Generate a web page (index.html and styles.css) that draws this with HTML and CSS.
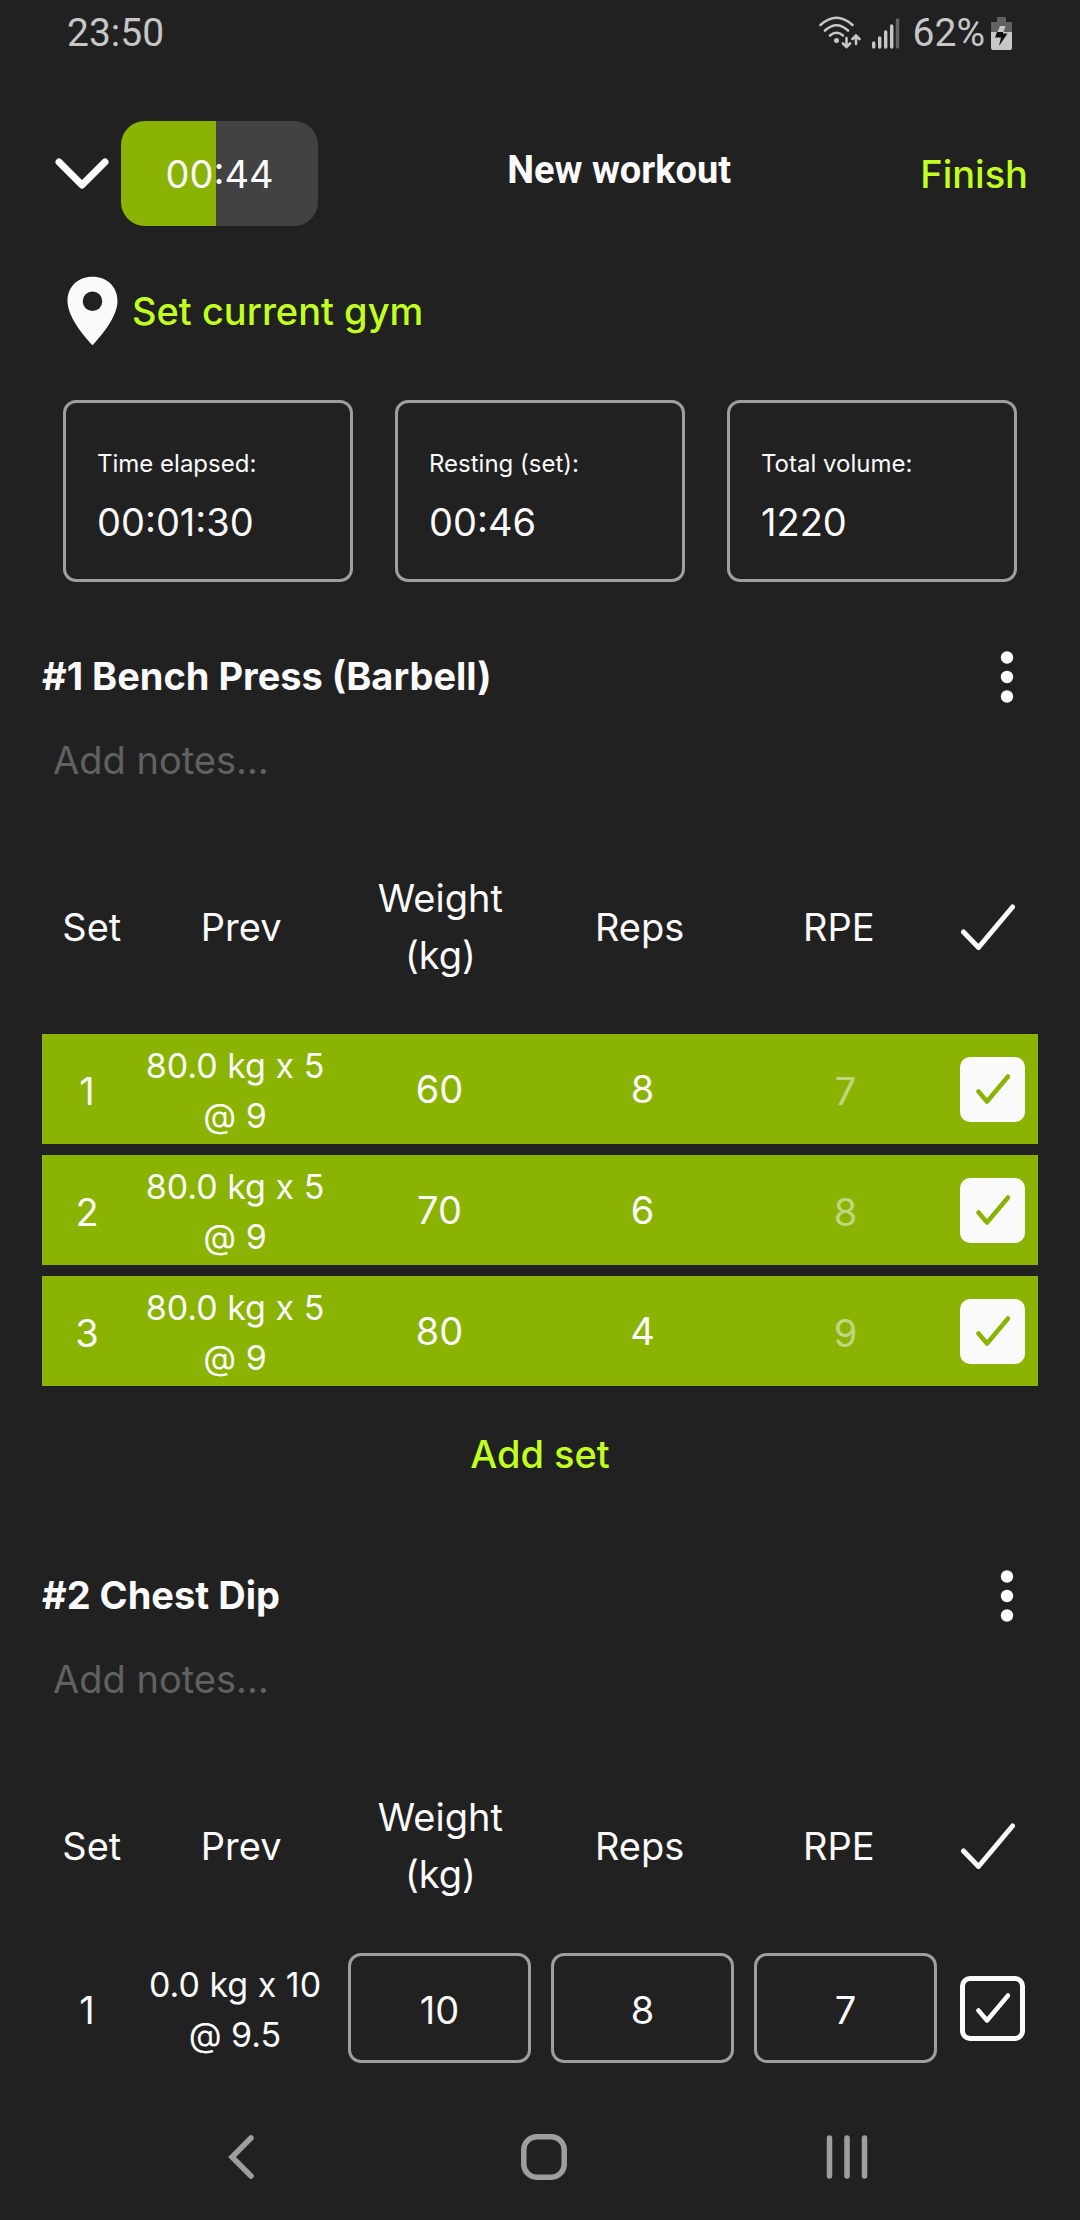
FILE: index.html
```html
<!DOCTYPE html>
<html lang="en">
<head>
<meta charset="utf-8">
<meta name="viewport" content="width=device-width, initial-scale=1">
<title>New workout</title>
<link rel="stylesheet" href="styles.css">
</head>
<body>
<svg class="defs" aria-hidden="true">
  <symbol id="tick" viewBox="0 0 54 46">
    <path d="M2.500 28 17.500 43.500 51.500 3" fill="none" stroke="currentColor" stroke-width="5" stroke-linecap="round" stroke-linejoin="round"/>
  </symbol>
  <symbol id="tick-small" viewBox="0 0 34 30">
    <path d="M2.500 17.500 11 27.500 32 2.500" fill="none" stroke="currentColor" stroke-width="4.500" stroke-linecap="round" stroke-linejoin="round"/>
  </symbol>
  <symbol id="dots" viewBox="0 0 14 52">
    <circle cx="7" cy="6.500" r="6.200"/><circle cx="7" cy="26" r="6.200"/><circle cx="7" cy="45.500" r="6.200"/>
  </symbol>
</svg>

<div class="status">
  <span>23:50</span>
  <div class="status-icons">
    <svg width="42" height="34" viewBox="819 14 42 34" aria-label="Wi-Fi" role="img">
      <g fill="none" stroke="currentColor" stroke-width="2.600" stroke-linecap="round">
        <path d="M820.500 23Q836.500 8.500 852.500 23M825 28.500Q836.500 18 848 28.500M830 33.500Q836.500 28 843 33.500"/>
        <path d="M846.500 36V44M843 41.500 846.500 45 850 41.500M856 42V34.500M852.500 37 856 33.500 859.500 37"/>
      </g>
      <circle cx="836.500" cy="38.500" r="2.500" fill="currentColor"/>
    </svg>
    <svg class="signal" width="28" height="34" viewBox="872 14 28 34" aria-label="Signal" role="img">
      <g stroke="currentColor" stroke-width="3.400" stroke-linecap="round">
        <path d="M873.700 41V45M879.700 36V45M885.700 30V45M891.700 24V45"/>
        <path d="M897.500 18V45" stroke="#636363"/>
      </g>
    </svg>
    <span>62%</span>
    <svg width="22" height="34" viewBox="991 14 22 34" aria-label="Charging" role="img">
      <path d="M997 15H1006V20H1012V30H991V20H997Z" fill="#616161"/>
      <path d="M991 30H1012V46Q1012 48 1010 48H993Q991 48 991 46Z" fill="currentColor"/>
      <path d="M1000 24H1005.500L1003.500 30H997.500Z" fill="currentColor"/>
      <path d="M997 30H1003V31.500H1007.500L999 44 1001 35.500H995Z" fill="#101010"/>
    </svg>
  </div>
</div>

<header class="top">
  <div class="top-left">
    <button class="icon-btn" aria-label="Minimise">
      <svg width="54" height="32" viewBox="0 0 54 32"><path d="M4 4 27 27 50 4" fill="none" stroke="currentColor" stroke-width="7" stroke-linecap="round" stroke-linejoin="round"/></svg>
    </button>
    <button class="timer">00:44</button>
  </div>
  <h1>New workout</h1>
  <button class="link">Finish</button>
</header>

<main>
  <button class="link gym">
    <svg width="51" height="70" viewBox="0 0 52 70"><path fill-rule="evenodd" d="M26 0C11 0 .5 10.500.5 24.500.5 41 17 60 26 70 35 60 51.500 41 51.500 24.500 51.500 10.500 41 0 26 0ZM26 15A10 10 0 0 1 26 35 10 10 0 0 1 26 15Z"/></svg>
    Set current gym
  </button>

  <dl class="stats">
    <div class="card"><dt>Time elapsed:</dt><dd>00:01:30</dd></div>
    <div class="card"><dt>Resting (set):</dt><dd>00:46</dd></div>
    <div class="card"><dt>Total volume:</dt><dd>1220</dd></div>
  </dl>

  <section class="exercise">
    <div class="title-row">
      <h2>#1 Bench Press (Barbell)</h2>
      <button class="icon-btn menu" aria-label="Exercise options"><svg width="14" height="52"><use href="#dots"/></svg></button>
    </div>
    <input class="notes" type="text" placeholder="Add notes..." aria-label="Notes for Bench Press">
    <table>
      <thead>
        <tr><th>Set</th><th>Prev</th><th>Weight (kg)</th><th>Reps</th><th>RPE</th><th><svg width="54" height="46" aria-label="Done" role="img"><use href="#tick"/></svg></th></tr>
      </thead>
      <tbody>
        <tr class="done">
          <td>1</td><td class="prev">80.0 kg x 5 @ 9</td>
          <td><input type="text" inputmode="decimal" value="60" aria-label="Weight, set 1"></td>
          <td><input type="text" inputmode="numeric" value="8" aria-label="Reps, set 1"></td>
          <td class="rpe"><input type="text" placeholder="7" aria-label="RPE, set 1"></td>
          <td><label class="check"><input type="checkbox" checked aria-label="Set 1 done"><svg width="34" height="30"><use href="#tick-small"/></svg></label></td>
        </tr>
        <tr class="done">
          <td>2</td><td class="prev">80.0 kg x 5 @ 9</td>
          <td><input type="text" inputmode="decimal" value="70" aria-label="Weight, set 2"></td>
          <td><input type="text" inputmode="numeric" value="6" aria-label="Reps, set 2"></td>
          <td class="rpe"><input type="text" placeholder="8" aria-label="RPE, set 2"></td>
          <td><label class="check"><input type="checkbox" checked aria-label="Set 2 done"><svg width="34" height="30"><use href="#tick-small"/></svg></label></td>
        </tr>
        <tr class="done">
          <td>3</td><td class="prev">80.0 kg x 5 @ 9</td>
          <td><input type="text" inputmode="decimal" value="80" aria-label="Weight, set 3"></td>
          <td><input type="text" inputmode="numeric" value="4" aria-label="Reps, set 3"></td>
          <td class="rpe"><input type="text" placeholder="9" aria-label="RPE, set 3"></td>
          <td><label class="check"><input type="checkbox" checked aria-label="Set 3 done"><svg width="34" height="30"><use href="#tick-small"/></svg></label></td>
        </tr>
      </tbody>
    </table>
    <button class="link add-set">Add set</button>
  </section>

  <section class="exercise">
    <div class="title-row">
      <h2>#2 Chest Dip</h2>
      <button class="icon-btn menu" aria-label="Exercise options"><svg width="14" height="52"><use href="#dots"/></svg></button>
    </div>
    <input class="notes" type="text" placeholder="Add notes..." aria-label="Notes for Chest Dip">
    <table>
      <thead>
        <tr><th>Set</th><th>Prev</th><th>Weight (kg)</th><th>Reps</th><th>RPE</th><th><svg width="54" height="46" aria-label="Done" role="img"><use href="#tick"/></svg></th></tr>
      </thead>
      <tbody>
        <tr>
          <td>1</td><td class="prev">0.0 kg x 10 @ 9.5</td>
          <td><input type="text" inputmode="decimal" value="10" aria-label="Weight, set 1"></td>
          <td><input type="text" inputmode="numeric" value="8" aria-label="Reps, set 1"></td>
          <td><input type="text" value="7" aria-label="RPE, set 1"></td>
          <td><label class="check"><input type="checkbox" aria-label="Set 1 done"><svg width="34" height="30"><use href="#tick-small"/></svg></label></td>
        </tr>
      </tbody>
    </table>
  </section>
</main>

<nav class="system-nav" aria-label="System">
  <button class="icon-btn" aria-label="Back"><svg width="26" height="44" viewBox="0 0 26 44"><path d="M23 3 4 22 23 41" fill="none" stroke="currentColor" stroke-width="5.500" stroke-linecap="round"/></svg></button>
  <button class="icon-btn" aria-label="Home"><svg width="46" height="46" viewBox="0 0 46 46"><rect x="2.800" y="2.800" width="40.400" height="40.400" rx="13" fill="none" stroke="currentColor" stroke-width="5.500"/></svg></button>
  <button class="icon-btn" aria-label="Recent apps"><svg width="42" height="44" viewBox="0 0 42 44"><path d="M3.500 3V41M21 3V41M38.500 3V41" stroke="currentColor" stroke-width="5.500" stroke-linecap="round"/></svg></button>
</nav>
</body>
</html>
```
FILE: styles.css
```css
:root {
  --bg: #212121;
  --fg: #fafafa;
  --green: #8bb303;
  --lime: #c0ff1f;
  --line: #9e9e9e;
}

* { box-sizing: border-box; }

body {
  margin: 0;
  min-height: 100vh;
  display: flex;
  flex-direction: column;
  background: var(--bg);
  color: var(--fg);
  font: 400 38px/56px Inter, "Liberation Sans", sans-serif;
}

.defs { position: absolute; width: 0; height: 0; }

svg { display: block; fill: currentColor; }

h1, h2, dl, dd { margin: 0; }

button {
  padding: 0;
  border: 0;
  background: none;
  color: inherit;
  font: inherit;
}

input {
  width: 100%;
  margin: 0;
  padding: 0;
  border: 0;
  background: none;
  color: inherit;
  font: inherit;
}

.icon-btn { display: grid; place-items: center; }

.link { color: var(--lime); font-weight: 500; }

/* status bar */
.status {
  display: flex;
  justify-content: space-between;
  align-items: center;
  height: 66px;
  padding: 0 67px;
  color: #c7c7c7;
  font: 400 39px/56px Roboto, sans-serif;
}

.status-icons { display: flex; align-items: center; }
.status-icons span { margin: 0 6px 0 13px; }
.signal { margin-left: 11px; }

/* app bar */
.top {
  display: flex;
  justify-content: space-between;
  align-items: center;
  padding: 55px 52px 0 55px;
}

.top-left { display: flex; align-items: center; gap: 12px; }

.timer {
  width: 197px;
  height: 105px;
  border-radius: 24px;
  background: linear-gradient(90deg, var(--green) 48%, #424242 48%);
}

.top h1 {
  padding: 0 0 8px;
  font: 700 38px/56px Roboto, sans-serif;
}

main { padding: 50px 42px 26px; }

.gym {
  display: flex;
  align-items: center;
  gap: 14px;
  margin-left: 25px;
}

.gym svg { color: var(--fg); }

/* summary cards */
.stats {
  display: grid;
  grid-template-columns: repeat(3, 1fr);
  gap: 42px;
  margin: 54px 21px 62px;
}

.card {
  display: grid;
  gap: 12px;
  padding: 43px 31px 29px;
  border: 3px solid var(--line);
  border-radius: 13px;
}

.card dt { font-size: 24px; line-height: 36px; }

/* exercises */
.exercise + .exercise { margin-top: 77px; }

.title-row {
  display: flex;
  justify-content: space-between;
  align-items: center;
  height: 64px;
}

.title-row h2 { font-size: 38px; font-weight: 700; }

.menu { width: 62px; height: 64px; padding-top: 2px; }

.notes {
  display: block;
  height: 72px;
  margin: 16px 0 74px;
  padding: 0 11px;
}

.notes::placeholder { color: #616161; opacity: 1; }

table, thead, tbody { display: block; }

tr { display: grid; align-items: center; }

thead tr {
  grid-template-columns: 1fr 2fr 2fr 2fr 2fr 1fr;
  margin-bottom: 50px;
}

th {
  display: grid;
  place-items: center;
  padding: 0 24px;
  font-weight: 400;
  line-height: 57px;
}

th:first-child, th:last-child { padding: 0; }

tbody { display: grid; gap: 11px; }

tbody tr {
  grid-template-columns: 90fr 206fr 203fr 203fr 203fr 91fr;
  height: 110px;
}

td { padding: 0; text-align: center; }

td:first-child, .prev { padding-top: 4px; }

.prev {
  padding-left: 8px;
  padding-right: 8px;
  font-size: 34px;
  line-height: 50px;
}

td input[type="text"] {
  display: block;
  width: calc(100% - 20px);
  height: 110px;
  margin: 0 auto;
  padding-top: 4px;
  border: 3px solid var(--line);
  border-radius: 13px;
  text-align: center;
}

.done { background: var(--green); }

.done input[type="text"] { padding-top: 0; border-color: transparent; }

.done .rpe input[type="text"] { padding-top: 4px; }

.rpe input::placeholder { color: var(--fg); opacity: 0.5; }

.check { display: grid; place-items: center; }

.check > * { grid-area: 1 / 1; }

.check input {
  appearance: none;
  width: 65px;
  height: 65px;
  border: 5px solid var(--fg);
  border-radius: 10px;
}

.check input:checked { background: var(--fg); }

.done .check svg { color: var(--green); }

.add-set { display: block; height: 64px; margin: 36px auto 0; }

/* system navigation */
.system-nav {
  display: grid;
  grid-template-columns: repeat(3, 1fr);
  align-items: center;
  height: 126px;
  margin-top: auto;
  padding: 0 82px 0 90px;
  color: var(--line);
}
```
